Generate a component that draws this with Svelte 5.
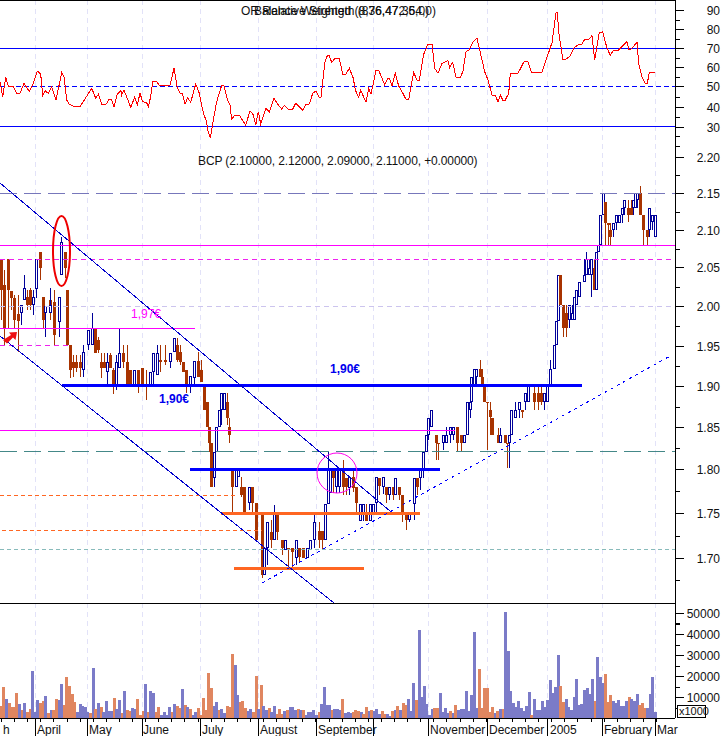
<script>
	// signed volume bars: + up day (blue), - down day (orange), height in px
	const volumes = [
		-12, -31, 19, -15, -11, -11, -25, 14, -8, 15, -6, -9, 47, 6, 18, -15, -17, 22, -5, 8, -8, -19, 18, 34, -13, -41, -32, -24,
		-16, 6, 14, 12, 11, 6, -5, 50, -9, 15, -11, 6, 17, 7, 7, -20, 9, 18, -5, 27, -8, -7, 10, 9, -19, -3, -7, 34, -6, 27, 25, -6,
		-11, 3, 6, 3, 11, -6, 14, -12, -10, 29, -13, 11, -9, 3, 6, -10, -3, -20, -8, -45, -30, 12, 16, -8, 9, 5, -12, -11, -64, 53,
		23, -16, -17, -10, 7, 9, -6, -42, 9, -33, 12, 8, -10, 6, 12, -4, -9, -4, 7, -8, 11, 11, 8, -9, 8, -8, 3, 6, 6, 8, 3, -6, 14,
		31, 13, 13, -8, 9, 9, 8, -19, 5, 6, 5, -6, -8, -7, 6,
		-4, -11, 7, -8, 7, 9, 4, -7, -4, 4, 2, -7, 8, -12, 8, -15, -13, 19, 7, 35, -18, 88, 21, 32, 14, 3, 9, -10, -10, 25, 6, 10, 5,
		-7, 5, -13, 8, 9, 9, 27, 7, 23, 86, 10, -49, -10, -30, -30, -6, -11, 5, -7, 9, -9, 106, 67, 27, 15, 11, 17, 10, 7, 12, 26, -3,
		19, 8, 8, 17, 11, 18, 38, 25, 31, 63, -32, -16, 19, 11, 8, 21, 39, 13, 14, 28, 30, 24, 39, -17, 61, 41, 35, -44, -16, -23, 17,
		15, 18, 12, 12, 17, -21, 19, 17, 24, -13, -15, -10, 10, 24, 41, 6
	];
	const volStep = (655 - 0.7) / (volumes.length - 1);

	// x, body top, body bottom, wick top, wick bottom, 1 = up (hollow blue), 0 = down (solid brown)
	const bars = [
		[1, 260, 290, 260, 320, 0], [4, 285, 328, 270, 345, 0], [8, 259, 290, 259, 328, 0], [11, 291, 298, 291, 310, 0],
		[14, 298, 320, 295, 328, 0], [18, 314, 321, 295, 352, 0], [21, 305, 313, 305, 325, 1], [24, 288, 300, 275, 300, 1],
		[27, 297, 305, 290, 310, 0], [30, 290, 305, 288, 310, 0], [33, 297, 305, 290, 315, 1], [36, 259, 289, 259, 298, 1],
		[40, 252, 268, 252, 280, 0], [43, 297, 320, 297, 328, 0], [45, 306, 313, 306, 337, 1], [50, 300, 311, 288, 320, 0],
		[50, 305, 313, 288, 313, 1], [54, 302, 335, 290, 345, 0], [59, 297, 322, 297, 337, 1], [61, 242, 275, 237, 275, 1],
		[65, 252, 268, 252, 278, 0], [67, 290, 345, 290, 345, 0], [70, 345, 370, 345, 378, 0], [73, 362, 368, 355, 377, 0],
		[76, 362, 368, 355, 372, 0], [80, 362, 368, 355, 377, 0], [83, 352, 370, 345, 377, 1], [88, 330, 345, 330, 350, 1],
		[92, 328, 345, 313, 345, 1], [95, 328, 353, 328, 353, 0], [98, 340, 350, 337, 353, 0], [101, 362, 368, 353, 378, 0],
		[104, 362, 368, 353, 368, 0], [107, 362, 372, 353, 385, 1], [110, 355, 368, 353, 368, 0], [113, 370, 385, 368, 394, 0],
		[116, 362, 385, 355, 390, 1], [119, 353, 368, 328, 368, 1], [123, 353, 362, 345, 368, 0], [127, 362, 385, 345, 385, 0],
		[130, 370, 385, 370, 385, 0], [134, 370, 385, 370, 385, 1], [138, 370, 385, 370, 393, 0], [142, 368, 385, 368, 385, 0],
		[146, 385, 385, 370, 400, 0], [150, 372, 385, 372, 385, 1], [153, 353, 372, 353, 385, 1], [157, 353, 375, 345, 375, 1],
		[160, 360, 362, 345, 372, 0], [165, 360, 362, 345, 365, 0], [170, 353, 362, 353, 368, 1], [174, 338, 352, 338, 352, 1],
		[177, 345, 360, 338, 362, 0], [180, 352, 362, 345, 365, 0], [183, 362, 372, 362, 372, 0], [186, 370, 385, 370, 393, 0],
		[190, 376, 385, 376, 393, 1], [194, 361, 378, 361, 385, 1], [198, 361, 377, 352, 377, 0], [201, 370, 382, 360, 382, 0],
		[204, 385, 410, 385, 410, 0], [207, 402, 427, 402, 427, 0], [209, 427, 443, 427, 452, 0], [211, 443, 487, 443, 487, 0],
		[214, 452, 478, 452, 487, 1], [216, 427, 452, 427, 452, 1], [219, 410, 427, 410, 427, 1], [221, 393, 410, 393, 425, 1],
		[224, 393, 410, 393, 410, 1], [227, 402, 418, 393, 425, 0], [229, 427, 435, 418, 443, 0],
		[232, 468, 487, 468, 512, 0], [236, 469, 487, 469, 487, 1], [238, 469, 477, 469, 477, 1], [241, 487, 495, 477, 497, 0],
		[244, 487, 513, 487, 513, 0], [249, 487, 503, 487, 510, 1], [252, 487, 503, 487, 513, 0], [256, 503, 540, 503, 540, 0],
		[262, 513, 575, 513, 578, 0], [264, 548, 575, 548, 575, 1], [267, 522, 548, 522, 565, 1], [271, 532, 540, 520, 548, 0],
		[274, 513, 540, 505, 540, 1], [277, 513, 532, 513, 540, 0], [282, 540, 548, 540, 555, 0], [285, 540, 550, 540, 550, 1],
		[288, 548, 550, 548, 567, 0], [292, 548, 552, 548, 567, 0], [296, 540, 558, 540, 565, 1], [299, 548, 557, 548, 562, 0],
		[303, 548, 558, 548, 558, 0], [307, 548, 558, 548, 558, 1], [310, 540, 550, 540, 550, 1], [314, 522, 540, 513, 548, 1],
		[319, 531, 540, 522, 548, 0], [322, 531, 540, 531, 550, 0], [325, 504, 540, 504, 540, 1], [328, 469, 504, 451, 504, 1],
		[330, 469, 493, 469, 493, 1], [333, 469, 478, 469, 493, 0], [336, 469, 487, 469, 493, 1], [339, 469, 487, 469, 493, 1],
		[343, 469, 487, 460, 495, 0], [346, 478, 487, 478, 495, 0], [349, 477, 488, 477, 495, 1], [353, 477, 488, 469, 492, 0],
		[356, 487, 503, 487, 512, 0], [360, 504, 521, 504, 521, 1], [363, 504, 513, 504, 521, 1], [366, 513, 521, 504, 521, 0],
		[370, 504, 521, 504, 521, 1], [373, 504, 513, 504, 513, 1], [376, 477, 503, 477, 513, 1], [379, 478, 486, 478, 495, 0],
		[383, 477, 487, 477, 494, 1], [386, 487, 495, 487, 503, 0], [389, 487, 495, 487, 500, 1], [393, 487, 495, 487, 500, 0],
		[395, 478, 495, 478, 495, 1], [399, 487, 495, 487, 500, 0], [402, 495, 513, 495, 522, 0], [406, 513, 520, 513, 530, 0],
		[409, 513, 520, 513, 522, 1], [414, 478, 504, 478, 520, 1], [417, 478, 487, 478, 495, 0], [420, 469, 478, 469, 490, 1],
		[423, 452, 469, 452, 478, 1], [426, 435, 452, 435, 452, 1], [428, 418, 435, 418, 440, 1], [431, 410, 427, 410, 427, 1],
		[436, 435, 443, 435, 460, 0], [438, 443, 443, 443, 460, 0], [443, 435, 443, 435, 450, 1], [446, 435, 443, 427, 443, 1],
		[450, 427, 435, 427, 443, 1], [453, 427, 435, 427, 440, 1], [457, 427, 443, 427, 452, 0], [461, 435, 443, 435, 452, 0],
		[464, 435, 443, 435, 443, 1], [467, 402, 435, 402, 435, 1], [470, 402, 410, 402, 418, 1], [471, 377, 402, 377, 402, 1],
		[474, 369, 385, 369, 385, 1], [476, 369, 377, 369, 385, 1], [480, 369, 377, 360, 377, 0], [482, 377, 385, 369, 385, 0],
		[484, 385, 402, 385, 402, 0], [487, 402, 402, 402, 450, 0], [490, 410, 417, 402, 435, 0], [492, 418, 435, 418, 435, 0],
		[498, 435, 443, 428, 443, 0], [500, 435, 443, 428, 443, 1], [505, 435, 443, 435, 443, 0], [507, 443, 443, 443, 468, 0],
		[509, 435, 443, 435, 468, 1], [511, 410, 435, 410, 435, 1], [515, 410, 418, 402, 418, 1], [519, 402, 410, 402, 418, 1],
		[522, 410, 412, 410, 418, 0], [525, 393, 402, 393, 410, 1], [528, 385, 402, 385, 402, 1], [534, 393, 402, 385, 410, 0],
		[538, 393, 402, 385, 410, 0], [541, 393, 402, 385, 405, 0], [544, 393, 402, 393, 410, 1], [547, 385, 402, 385, 402, 1],
		[550, 369, 385, 360, 385, 1], [554, 345, 369, 345, 369, 1], [556, 321, 345, 321, 345, 1], [558, 275, 321, 275, 321, 1],
		[560, 275, 305, 275, 305, 0], [563, 305, 328, 305, 337, 0], [566, 313, 328, 305, 337, 0], [569, 305, 320, 305, 328, 1],
		[572, 313, 320, 305, 320, 1], [574, 297, 320, 297, 320, 1], [576, 290, 305, 290, 305, 1], [579, 282, 297, 282, 297, 1],
		[584, 275, 282, 259, 282, 1], [586, 259, 275, 252, 275, 1], [589, 268, 275, 259, 275, 1], [591, 259, 275, 259, 297, 1],
		[594, 268, 290, 259, 290, 0], [596, 252, 290, 252, 290, 1], [598, 245, 252, 245, 252, 1], [600, 215, 245, 215, 245, 1],
		[603, 193, 215, 193, 215, 1], [605, 202, 223, 202, 245, 0], [608, 223, 225, 223, 245, 0], [610, 230, 237, 223, 245, 0],
		[613, 223, 230, 223, 237, 1], [616, 215, 223, 215, 230, 1], [619, 215, 223, 215, 223, 1], [622, 208, 215, 208, 223, 1],
		[624, 200, 208, 200, 215, 1], [628, 208, 215, 200, 222, 0], [631, 208, 215, 200, 215, 0], [633, 200, 208, 200, 215, 1],
		[635, 193, 208, 193, 208, 1], [637, 193, 200, 193, 208, 1], [640, 193, 215, 186, 215, 0], [643, 215, 230, 215, 245, 0],
		[647, 230, 237, 230, 245, 0], [649, 208, 230, 208, 237, 1], [652, 215, 222, 215, 230, 1], [655, 215, 237, 215, 237, 1]
	];

	// rsi trace read off in 3x coords, offset for right half
	const rsiLeft = '0,245 8,290 17,232 25,258 40,260 50,280 60,280 72,250 88,275 100,250 112,213 122,222 128,287 135,272 145,280 155,260 168,300 185,218 192,230 200,300 208,313 225,320 240,320 275,265 287,295 295,283 305,313 318,313 328,297 335,300 342,320 352,283 363,272 365,285 372,270 392,322 404,292 412,315 420,280 428,305 440,308 445,320 452,290 458,245 468,243 478,256 510,256 522,205 532,262 540,280 547,280 555,313 563,293 572,307 587,252 598,280 606,320 612,345 618,360 624,392 631,415 640,360 650,305 665,256 672,258 682,298 690,315 695,358 704,345 718,345 737,376 750,332 760,345 767,376 775,335 782,372 798,325 808,335 822,295 835,315 845,327 853,316 865,327 878,327 887,310 908,330 918,313 928,312 938,280 948,273 957,292 963,292 975,185 982,167 988,167 995,187 1005,175 1018,175 1028,222 1038,222 1048,205 1060,235 1066,270 1076,292 1082,270';
	const rsiRight = '0,280 12,307 20,265 27,283 42,211 50,211 68,255 78,235 82,235 90,258 100,220 110,258 120,275 132,298 140,298 155,217 165,241 172,241 185,163 198,132 210,132 218,205 228,220 240,190 258,182 263,203 272,187 282,232 296,232 303,212 312,155 322,150 332,127 345,115 368,215 378,240 390,285 400,287 408,305 415,285 422,300 430,300 440,280 445,220 468,220 486,185 498,185 508,216 540,216 570,128 582,38 586,38 590,95 602,177 612,177 625,168 635,145 650,133 660,132 668,118 680,118 690,107 698,180 712,98 722,95 735,145 745,165 755,150 770,150 795,125 800,148 807,148 825,127 830,190 840,230 850,250 856,250 862,218 878,218';
	const toPoints = (raw, dx) =>
		raw
			.split(' ')
			.map((p) => {
				const [x, y] = p.split(',').map(Number);
				return `${(x / 3 + dx).toFixed(1)},${(y / 3).toFixed(1)}`;
			})
			.join(' ');
	const rsiPoints = toPoints(rsiLeft, 0) + ' ' + toPoints(rsiRight, 362);

	const grid = [35.5, 87.5, 142.5, 200.5, 258.5, 316.5, 373.5, 428.5, 487.5, 547.5, 602.5, 655.5];

	const rsiScale = [['90', 10], ['80', 29], ['70', 48], ['60', 67], ['50', 86], ['40', 107], ['30', 127]];
	const priceScale = [
		['2.20', 157], ['2.15', 193], ['2.10', 230], ['2.05', 267], ['2.00', 306], ['1.95', 346],
		['1.90', 386], ['1.85', 427], ['1.80', 469], ['1.75', 513], ['1.70', 558]
	];
	const volScale = [['50000', 613], ['40000', 634], ['30000', 655], ['20000', 676], ['10000', 697]];
	const mids = (scale) => scale.slice(1).map((s, i) => Math.round((s[1] + scale[i][1]) / 2));
	const minorTicks = [...mids(rsiScale), 136, 146, 175, ...mids(priceScale), 580, 623, ...mids(volScale), 708];

	const months = [
		['h', 3], ['April', 37], ['May', 89], ['June', 143], ['July', 202], ['August', 260], ['September', 318],
		['November', 430], ['December', 489], ['2005', 550], ['February', 604], ['Mar', 657]
	];
	const weekTicks = Array.from({ length: 51 }, (_, i) => Math.round(1 + i * 13.1) + 0.5);

	// straight levels drawn over the price bars
	const levels = [
		{ y: 193.5, x1: 0, x2: 675, color: '#7777bb', dash: '17 7' },
		{ y: 245.5, x1: 0, x2: 675, color: '#ff00ff' },
		{ y: 259.5, x1: 0, x2: 675, color: '#ee22ee', dash: '5 4' },
		{ y: 306.5, x1: 0, x2: 675, color: '#ccc4ee', dash: '5 4' },
		{ y: 328.5, x1: 0, x2: 195, color: '#ff00ff' },
		{ y: 345.5, x1: 0, x2: 68, color: '#ee22ee', dash: '5 4' },
		{ y: 430.5, x1: 0, x2: 455, color: '#ff00ff' },
		{ y: 451.5, x1: 0, x2: 675, color: '#448888', dash: '17 7' },
		{ y: 495.5, x1: 0, x2: 238, color: '#ff6622', dash: '4 3' },
		{ y: 530.5, x1: 2, x2: 262, color: '#ff6622', dash: '4 3' },
		{ y: 549.5, x1: 0, x2: 675, color: '#88bbbb', dash: '4 3' }
	];
</script>

<svg class="chart" width="724" height="736" viewBox="0 0 724 736">
	<g class="crisp">
		{#each grid as x}
			<line x1={x} x2={x} y1="0" y2="718" class="grid" />
		{/each}

		{#each volumes as v, i}
			<rect
				x={Math.round(0.7 + i * volStep) - 1}
				y={718 - Math.abs(v)}
				width="3"
				height={Math.abs(v)}
				fill={v > 0 ? '#7b7bc8' : '#e08660'}
			/>
		{/each}

		<line x1="0" x2="675" y1="48.5" y2="48.5" class="band" />
		<line x1="0" x2="675" y1="86.5" y2="86.5" class="band mid" />
		<line x1="0" x2="675" y1="126.5" y2="126.5" class="band" />
		<polyline points={rsiPoints} class="rsi" />

		{#each bars as [x, top, bottom, wickTop, wickBottom, up]}
			<line
				x1={x + 0.5}
				x2={x + 0.5}
				y1={wickTop}
				y2={wickBottom}
				stroke={up ? '#000099' : '#a83300'}
			/>
			{#if up}
				<rect x={x - 0.5} y={top + 0.5} width="2" height={Math.max(bottom - top - 1, 1)} fill="#fff" stroke="#000099" />
			{:else}
				<rect x={x - 1} y={top} width="3" height={Math.max(bottom - top, 1)} fill="#a83300" />
			{/if}
		{/each}

		{#each levels as l}
			<line x1={l.x1} x2={l.x2} y1={l.y} y2={l.y} stroke={l.color} stroke-dasharray={l.dash} />
		{/each}

		<line x1="62" x2="582" y1="385" y2="385" class="thick blue" />
		<line x1="190" x2="440" y1="469" y2="469" class="thick blue" />
		<line x1="221" x2="420" y1="513" y2="513" class="thick orange" />
		<line x1="234" x2="364" y1="568" y2="568" class="thick orange" />

		<line x1="0" y1="183" x2="390" y2="511" class="trend" />
		<line x1="0" y1="336" x2="334" y2="603" class="trend" />
		<line x1="262" y1="583" x2="672" y2="355" class="trend dotted" />

		<line x1="0" x2="675" y1="0.5" y2="0.5" class="frame" />
		<line x1="0" x2="675" y1="603.5" y2="603.5" class="frame" />
		<line x1="0" x2="675" y1="718.5" y2="718.5" class="frame" />
		<line x1="675.5" x2="675.5" y1="0" y2="718" class="frame" />

		{#each [...rsiScale, ...priceScale, ...volScale] as [, y]}
			<line x1="676" x2="684" y1={y + 0.5} y2={y + 0.5} class="frame" />
		{/each}
		{#each minorTicks as y}
			<line x1="676" x2="680" y1={y + 0.5} y2={y + 0.5} class="frame" />
		{/each}

		{#each weekTicks as x}
			<line x1={x} x2={x} y1="719" y2="722" class="frame" />
		{/each}
		{#each grid as x}
			<line x1={x} x2={x} y1="719" y2="736" class="frame" />
		{/each}

		<rect x="677.5" y="705.5" width="28" height="12" class="unit" />
	</g>

	<ellipse cx="61.5" cy="251" rx="8.5" ry="35" class="oval" />
	<circle cx="337" cy="473" r="20" class="ring" />
	<path d="M3 340 L7 343.5 L13 337.5 L15.5 340 L17 332 L9 332.5 L11 335 Z" fill="#ee1111" />

	<text x="241" y="15" class="label">OR Relative Strength (876,472,6,0)</text>
	<text x="254" y="15" class="label">Balance Weighted (8,36,47,354,0)</text>
	<text x="198" y="165" class="label title">BCP (2.10000, 2.12000, 2.09000, 2.11000, +0.00000)</text>

	<text x="131" y="318" class="note magenta">1,97€</text>
	<text x="159" y="403" class="note bold">1,90€</text>
	<text x="330" y="373" class="note bold">1,90€</text>

	{#each [...rsiScale, ...priceScale, ...volScale] as [name, y]}
		<text x="720" y={y + 5} class="label end">{name}</text>
	{/each}

	{#each months as [name, x]}
		<text {x} y="734" class="label">{name}</text>
	{/each}

	<text x="679" y="715" class="label small">x1000</text>
</svg>

<style>
	:global(body) {
		background: #fff;
	}

	.chart {
		display: block;
		background: #fff;
	}

	.crisp {
		shape-rendering: crispEdges;
	}

	.grid {
		stroke: #e2e2f8;
		stroke-dasharray: 5 4;
	}

	.band {
		stroke: #0000ff;
	}

	.mid {
		stroke-dasharray: 5 3;
	}

	.rsi {
		fill: none;
		stroke: #ff0000;
	}

	.thick {
		stroke-width: 3;
	}

	.blue {
		stroke: #0000ff;
	}

	.orange {
		stroke: #ff6622;
	}

	.trend {
		stroke: #0000cc;
	}

	.dotted {
		stroke: #0000ff;
		stroke-dasharray: 3 4;
	}

	.frame {
		stroke: #000;
	}

	.unit {
		fill: #fff;
		stroke: #000;
	}

	.oval {
		fill: none;
		stroke: #ee0000;
		stroke-width: 2;
	}

	.ring {
		fill: none;
		stroke: #ff00ee;
	}

	.label {
		font-family: 'Liberation Sans', Arial, sans-serif;
		font-size: 12px;
		fill: #111;
	}

	.title {
		letter-spacing: -0.12px;
	}

	.end {
		text-anchor: end;
	}

	.small {
		font-size: 11px;
	}

	.note {
		font-family: 'Liberation Sans', Arial, sans-serif;
		font-size: 12px;
	}

	.magenta {
		fill: #ff00ff;
	}

	.bold {
		font-weight: 700;
		fill: #0000ee;
	}
</style>
